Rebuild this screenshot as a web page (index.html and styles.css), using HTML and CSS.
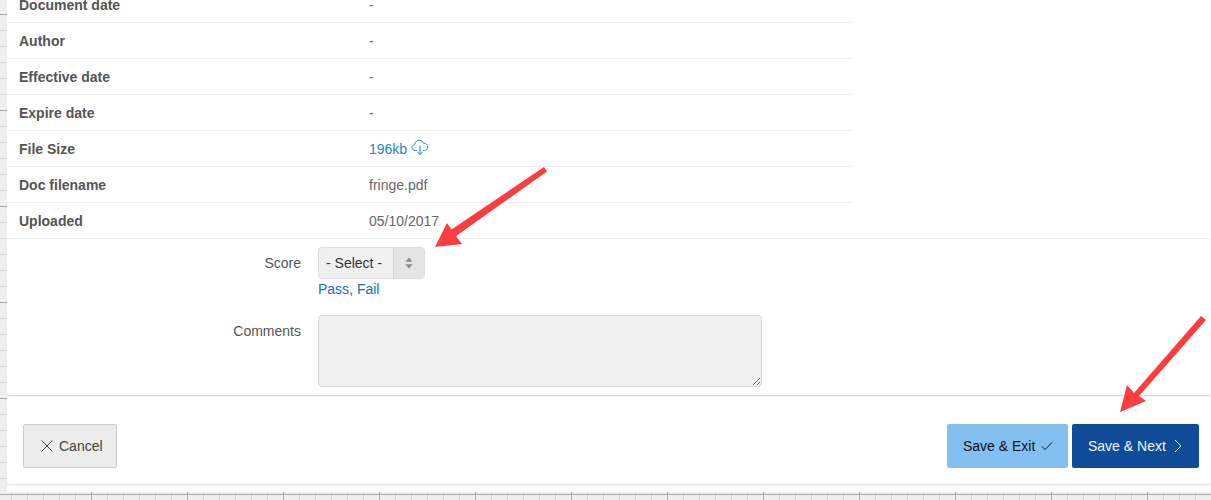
FILE: index.html
```html
<!DOCTYPE html>
<html lang="en">
<head>
  <meta charset="UTF-8" />
  <meta name="viewport" content="width=device-width, initial-scale=1.0" />
  <title>Document review</title>
  <link rel="stylesheet" href="styles.css">
</head>
<body>
<main class="sheet">
  <section class="details">
    <div class="detail-row"><span class="detail-label">Document date</span><span class="detail-value">-</span></div>
    <div class="detail-row"><span class="detail-label">Author</span><span class="detail-value">-</span></div>
    <div class="detail-row"><span class="detail-label">Effective date</span><span class="detail-value">-</span></div>
    <div class="detail-row"><span class="detail-label">Expire date</span><span class="detail-value">-</span></div>
    <div class="detail-row">
      <span class="detail-label">File Size</span>
      <a class="detail-value file-link" href="#">196kb
        <svg class="cloud-icon" viewBox="0 0 18 17" width="18" height="17" fill="none" stroke="currentColor" stroke-width="1" stroke-linecap="round" stroke-linejoin="round">
          <path d="M5.5 11.5H4.2C2.4 11.5 1 10.2 1 8.5C1 7 2.1 5.8 3.6 5.6C3.9 3.2 5.8 1.2 8.2 1.2C10.2 1.2 11.9 2.5 12.6 4.3C14.9 4.2 16.8 6 16.8 8.1C16.8 10 15.3 11.5 13.4 11.5H12.5"/>
          <path d="M9 7V15.5M6.4 13L9 15.6L11.6 13"/>
        </svg>
      </a>
    </div>
    <div class="detail-row"><span class="detail-label">Doc filename</span><span class="detail-value">fringe.pdf</span></div>
    <div class="detail-row"><span class="detail-label">Uploaded</span><span class="detail-value">05/10/2017</span></div>
  </section>

  <form class="review-form">
    <label class="form-label" for="score">Score</label>
    <div>
      <div class="select-box" id="score">
        <span class="select-text">- Select -</span>
        <span class="select-arrows">
          <svg viewBox="0 0 8 12" width="8" height="12" fill="#8a8a8a"><path d="M4 0.5L7.6 4.8H0.4Z"/><path d="M4 11.5L0.4 7.2H7.6Z"/></svg>
        </span>
      </div>
      <div class="quick-links"><a href="#">Pass</a>, <a href="#">Fail</a></div>
    </div>

    <label class="form-label" for="comments">Comments</label>
    <textarea class="comments" id="comments"></textarea>
  </form>

  <div class="actions">
    <button type="button" class="btn btn-cancel">
      <svg viewBox="0 0 14 14" width="14" height="14" fill="none" stroke="currentColor" stroke-width="1"><path d="M1.5 1.5L12.5 12.5M12.5 1.5L1.5 12.5"/></svg>
      Cancel
    </button>
    <div class="actions-right">
      <button type="button" class="btn btn-exit">
        Save &amp; Exit
        <svg viewBox="0 0 12 10" width="12" height="10" fill="none" stroke="currentColor" stroke-width="1"><path d="M1 5.5L4 8.5L11 1.5"/></svg>
      </button>
      <button type="button" class="btn btn-next">
        Save &amp; Next
        <svg viewBox="0 0 8 14" width="8" height="14" fill="none" stroke="currentColor" stroke-width="1"><path d="M1 1L7 7L1 13"/></svg>
      </button>
    </div>
  </div>
</main>

<svg class="callouts" viewBox="0 0 1211 500" width="1211" height="500" fill="#fc3d3f">
  <path d="M435 247L447 223L451.500 229.500L544 167L547 171.500L456 236L462 244Z"/>
  <path d="M1120 412L1127 385L1134 393L1201 316L1206 320L1139 396L1146 401Z"/>
</svg>
</body>
</html>
```

FILE: styles.css
```css
html, body {
  height: 100%;
}

body {
  position: relative;
  height: 500px;
  margin: 0;
  overflow: hidden;
  font-family: "Liberation Sans", Arial, sans-serif;
  font-size: 14px;
  color: #555;
  background-color: #eee;
  background-image:
    linear-gradient(#aaa 1px, transparent 1px),
    linear-gradient(90deg, #aaa 1px, transparent 1px),
    linear-gradient(#d6d6d6 1px, transparent 1px),
    linear-gradient(90deg, #d6d6d6 1px, transparent 1px);
  background-size: 100% 96px, 96px 100%, 100% 16px, 16px 100%;
  background-position: 0 14px, 91px 0, 0 14px, 11px 0;
}

.sheet {
  margin-left: 7px;
  height: 492px;
  background: #fff;
  overflow: hidden;
}

/* first row is scrolled off the top in this view */
.details {
  margin-top: -13px;
}

.detail-row {
  display: flex;
  align-items: center;
  width: 846px;
  height: 35px;
  padding-left: 12px;
  box-sizing: content-box;
  border-bottom: 1px solid #eee;
  width: 834px;
}

.detail-label {
  width: 350px;
  font-weight: bold;
}

.detail-value {
  color: #666;
}

.file-link {
  display: flex;
  align-items: center;
  gap: 4px;
  color: #1b87cb;
  text-decoration: none;
}

.cloud-icon {
  margin-top: -3px;
}

.review-form {
  display: grid;
  grid-template-columns: 294px 444px;
  column-gap: 17px;
  row-gap: 16px;
  padding: 8px 0;
  border-top: 1px solid #eee;
  margin-top: -1px;
  border-radius: 3px;
  box-shadow: 0 1px 2px rgba(0, 0, 0, 0.18);
}

.form-label {
  text-align: right;
  line-height: 32px;
}

.select-box {
  display: flex;
  width: 107px;
  height: 32px;
  box-sizing: border-box;
  border: 1px solid #ddd;
  border-radius: 4px;
  background: #f0f0f0;
  color: #333;
}

.select-text {
  flex: 1;
  padding-left: 7px;
  line-height: 30px;
}

.select-arrows {
  display: flex;
  align-items: center;
  justify-content: center;
  width: 30px;
  border-left: 1px solid #d4d4d4;
  background: #e4e4e4;
  border-radius: 0 3px 3px 0;
}

.quick-links {
  line-height: 20px;
  color: #555;
}

.quick-links a {
  color: #0f6fc6;
  text-decoration: none;
}

.comments {
  display: block;
  width: 444px;
  height: 72px;
  box-sizing: border-box;
  margin: 0;
  border: 1px solid #d8d8d8;
  border-radius: 4px;
  background: #f0f0f0;
}

.actions {
  display: flex;
  justify-content: space-between;
  margin-top: 1px;
  padding: 28px 12px 16px 16px;
  border-radius: 3px;
  box-shadow: 0 1px 3px rgba(0, 0, 0, 0.15);
}

.actions-right {
  display: flex;
  gap: 4px;
}

.btn {
  display: flex;
  align-items: center;
  height: 44px;
  box-sizing: border-box;
  border: 0;
  border-radius: 2px;
  font-family: inherit;
  font-size: 14px;
}

.btn-cancel {
  gap: 5px;
  width: 94px;
  padding: 0 0 0 16px;
  border: 1px solid #ccc;
  background: #ececec;
  color: #444;
}

.btn-exit {
  gap: 6px;
  width: 121px;
  padding-left: 16px;
  background: #83c0f0;
  color: #111;
}

.btn-next {
  gap: 8px;
  width: 127px;
  padding-left: 16px;
  background: #104c97;
  color: #f2f5fa;
}

.callouts {
  position: absolute;
  top: 0;
  left: 0;
}
```
